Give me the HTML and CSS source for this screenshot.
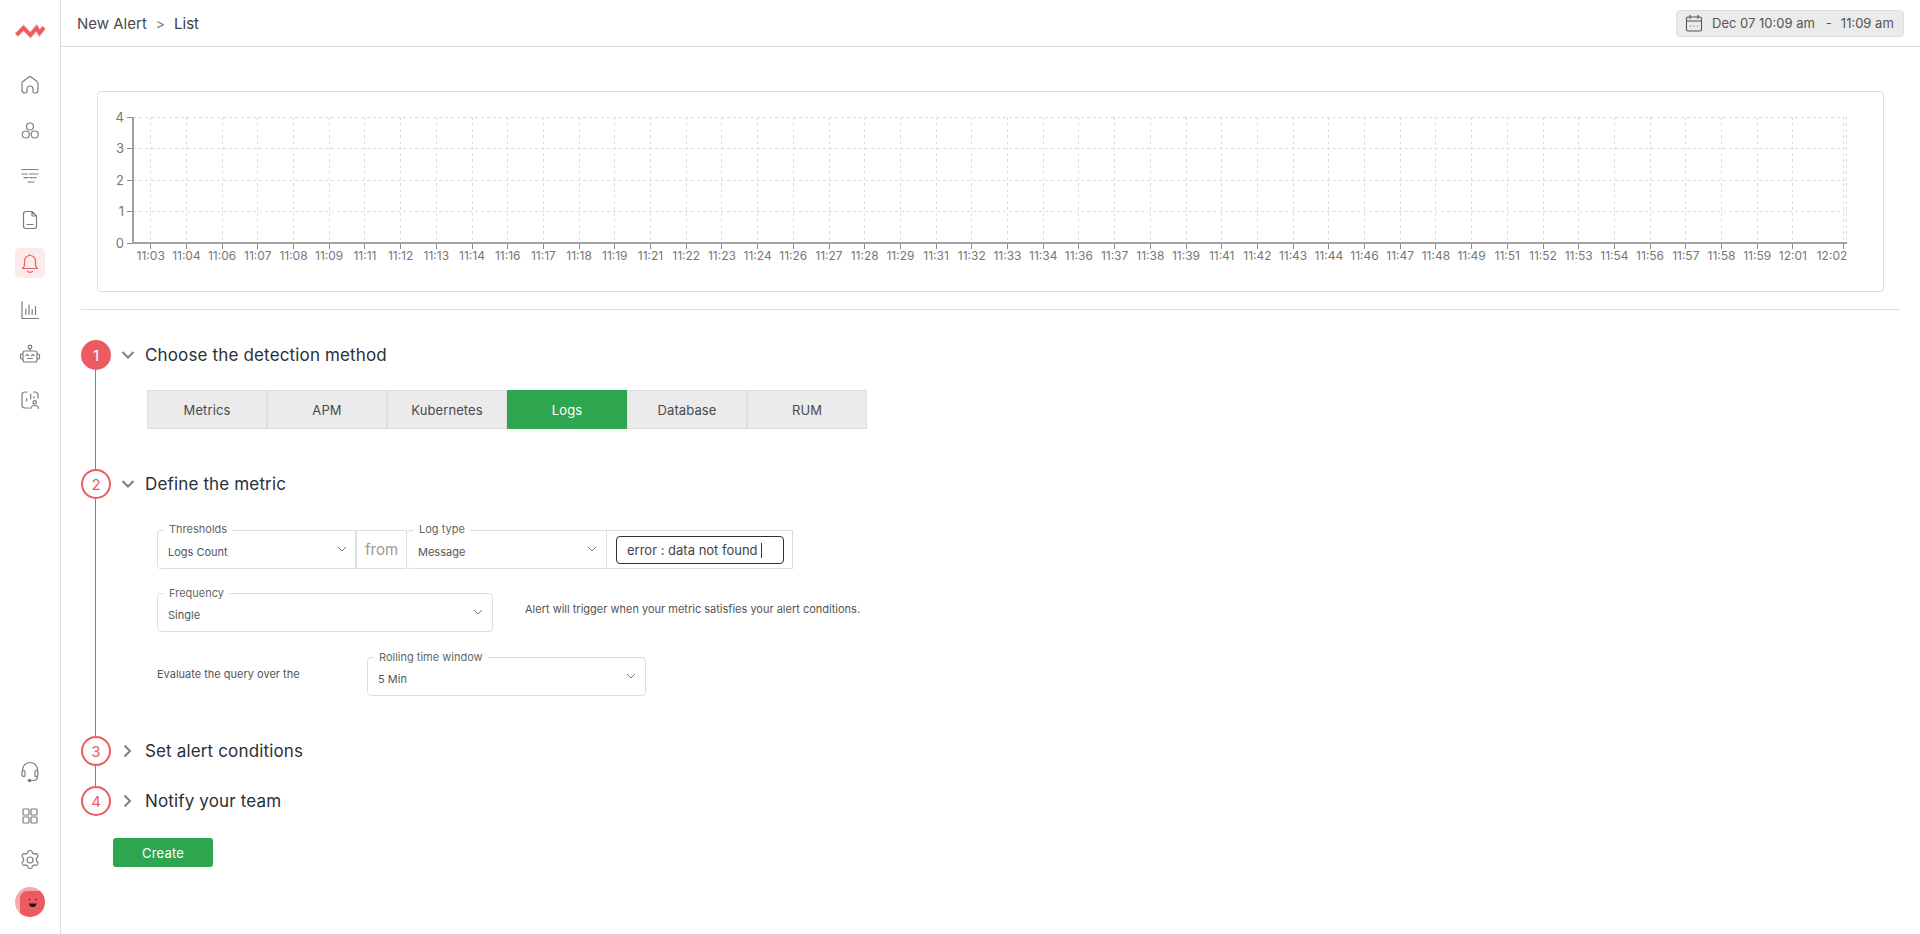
FILE: index.html
```html
<!DOCTYPE html>
<html lang="en">
<head>
<meta charset="utf-8">
<title>New Alert</title>
<link rel="stylesheet" href="styles.css">
</head>
<body>
<div class="app">
  <aside class="sidebar">
    <div class="logo">
      <svg width="30" height="30" viewBox="15 15 30 30"><path class="logo-glow" d="M16.500 35L23.500 28L30.500 35L36.500 28L39.500 33L44 27.500"/><path class="logo-line" d="M16.500 35L23.500 28L30.500 35L36.500 28L39.500 33L44 27.500"/></svg>
    </div>
    <nav class="nav">
      <a class="nav-item"><svg class="ico" viewBox="0 0 20 20"><path d="M2 15V8.500q0-1.300 1-2.100l5.500-4.200q1.500-1.100 3 0l5.500 4.200q1 .8 1 2.100V15q0 3-3 3h-.8q-1.200 0-1.200-1.200V14a3 3 0 0 0-6 0v2.800Q7 18 5.800 18H5q-3 0-3-3z"/></svg></a>
      <a class="nav-item"><svg class="ico" viewBox="0 0 20 20"><circle cx="10" cy="6.500" r="3.500"/><circle cx="5.800" cy="14.500" r="3.500"/><circle cx="14.700" cy="14.500" r="3.500"/></svg></a>
      <a class="nav-item"><svg class="ico" viewBox="0 0 20 20"><path d="M2 4.500h16M2 9h5.500M9.500 9H15.500M16.500 9H18M4 12.700h4M10 12.700h2.500M14 12.700h2M8 17h6"/></svg></a>
      <a class="nav-item"><svg class="ico" viewBox="0 0 20 20"><path d="M3.500 4q0-2.500 2.500-2.500h6L16.500 6v10q0 2.500-2.500 2.500H6q-2.500 0-2.500-2.500zM12 1.500V6h4.500M7 14.500h6"/></svg></a>
      <a class="nav-item nav-active"><svg class="ico ico-red" viewBox="0 0 20 20"><path d="M2.500 15.500q2-1.500 2-4V8a5.500 5.500 0 0 1 11 0v3.500q0 2.500 2 4zM9.500 2.500V1.500M7.500 18.500q2.500 1.500 5 0"/></svg></a>
      <a class="nav-item"><svg class="ico" viewBox="0 0 20 20"><path d="M2 1.500V18.500H18.500M5.800 14.500V9M9 14.500V5M12.200 14.500V9.500M15.500 14.500V6.500"/></svg></a>
      <a class="nav-item"><svg class="ico ico-wide" viewBox="0 0 22 22"><circle cx="11" cy="3" r="1.800"/><path d="M11 4.800V7M6 7h10q2 0 2 2v7q0 2-2 2H6q-2 0-2-2V9q0-2 2-2zM4 10H2.500q-1 0-1 1v3q0 1 1 1H4M18 10h1.500q1 0 1 1v3q0 1-1 1H18M7 11.500l1.200-1 1.200 1M12.600 11.500l1.200-1 1.200 1M8.500 14.500h5"/></svg></a>
      <a class="nav-item"><svg class="ico" viewBox="0 0 20 20"><path d="M7 2H5q-3 0-3 3v10q0 3 3 3h4M13.500 2H15q3 0 3 3v3M6.700 11V8.500M10.700 9V4M14 8V6.500M14.700 14a1.700 1.700 0 1 1 0-3.400 1.700 1.700 0 0 1 0 3.400zM11 18.500q0-3 3.700-3t3.700 3"/></svg></a>
    </nav>
    <nav class="nav nav-bottom">
      <a class="nav-item"><svg class="ico ico-wide" viewBox="0 0 22 22"><path d="M3.500 11V9a7.500 7.500 0 0 1 15 0v2M5 9.500q-2 0-2 2v2q0 2 2 2 1 0 1-1v-4q0-1-1-1zM17 9.500q2 0 2 2v2q0 2-2 2-1 0-1-1v-4q0-1 1-1zM18.500 15.500q0 4-4.500 4H11.500"/><circle class="ico-fill" cx="10.500" cy="19.500" r="1.200"/></svg></a>
      <a class="nav-item"><svg class="ico" viewBox="0 0 20 20"><rect x="3" y="3" width="6" height="6" rx=".8"/><rect x="11" y="3" width="6" height="6" rx=".8"/><rect x="3" y="11" width="6" height="6" rx=".8"/><rect x="11" y="11" width="6" height="6" rx=".8"/></svg></a>
      <a class="nav-item"><svg class="ico ico-wide" viewBox="0 0 22 22"><circle cx="11" cy="11" r="3"/><path d="M9 2.500q.4-1 2-1t2 1l.4 1.600 1.700 1 1.700-.5q1-.2 1.800 1.100t.1 2.200L17.500 9.200v2.600l1.200 1.300q.7.900-.1 2.200t-1.800 1.100l-1.700-.5-1.700 1-.4 1.600q-.4 1-2 1t-2-1l-.4-1.600-1.700-1-1.700.5q-1 .2-1.800-1.100t-.1-2.200l1.200-1.300V9.200L3.300 7.900q-.7-.9.1-2.200t1.800-1.100l1.700.5 1.700-1z"/></svg></a>
      <a class="nav-item nav-avatar"><span class="avatar"><svg width="30" height="30" viewBox="0 0 30 30"><rect class="avatar-face" x="5" y="4" width="31" height="30" rx="7"/><circle class="avatar-ink" cx="14.500" cy="12.500" r=".7"/><circle class="avatar-ink" cx="21" cy="12.500" r=".7"/><path class="avatar-ink" d="M14 16.500h7.500q-.5 3.500-3.800 3.500T14 16.500z"/></svg></span></a>
    </nav>
  </aside>
  <main class="main">
    <header class="topbar">
      <div class="crumbs"><span>New Alert</span><span class="crumb-sep">&gt;</span><span class="crumb-current">List</span></div>
      <div class="range">
        <svg class="range-ico" viewBox="0 0 18 18"><path d="M3 3h12q1.500 0 1.500 1.500v11q0 1.500-1.500 1.500H3q-1.500 0-1.500-1.500v-11Q1.500 3 3 3zM1.500 7h15M5 1v4M13 1v4M5 12h1M8.500 12h1M12 12h1"/></svg>
        <span class="range-text">Dec 07 10:09 am</span><span class="range-dash">-</span><span class="range-text">11:09 am</span>
      </div>
    </header>
    <div class="content">
      <section class="chart-card">
        <svg class="chart" viewBox="98 92 1785 199">
          <path class="grid" d="M133 148.500H1847M133 180H1847M133 211.500H1847M133 117H1847M150.700 117V243M186.400 117V243M222.100 117V243M257.800 117V243M293.500 117V243M329.200 117V243M364.900 117V243M400.600 117V243M436.300 117V243M472 117V243M507.700 117V243M543.400 117V243M579.100 117V243M614.800 117V243M650.500 117V243M686.200 117V243M721.900 117V243M757.600 117V243M793.300 117V243M829 117V243M864.700 117V243M900.400 117V243M936.100 117V243M971.800 117V243M1007.500 117V243M1043.200 117V243M1078.900 117V243M1114.600 117V243M1150.300 117V243M1186 117V243M1221.700 117V243M1257.400 117V243M1293.100 117V243M1328.800 117V243M1364.500 117V243M1400.200 117V243M1435.900 117V243M1471.600 117V243M1507.300 117V243M1543 117V243M1578.700 117V243M1614.400 117V243M1650.100 117V243M1685.800 117V243M1721.500 117V243M1757.200 117V243M1792.900 117V243M1843.500 117V243M1846.500 117V243"/>
          <path class="tick" d="M127 117H133M127 148.500H133M127 180H133M127 211.500H133M127 243H133M150.700 243V249M186.400 243V249M222.100 243V249M257.800 243V249M293.500 243V249M329.200 243V249M364.900 243V249M400.600 243V249M436.300 243V249M472 243V249M507.700 243V249M543.400 243V249M579.100 243V249M614.800 243V249M650.500 243V249M686.200 243V249M721.900 243V249M757.600 243V249M793.300 243V249M829 243V249M864.700 243V249M900.400 243V249M936.100 243V249M971.800 243V249M1007.500 243V249M1043.200 243V249M1078.900 243V249M1114.600 243V249M1150.300 243V249M1186 243V249M1221.700 243V249M1257.400 243V249M1293.100 243V249M1328.800 243V249M1364.500 243V249M1400.200 243V249M1435.900 243V249M1471.600 243V249M1507.300 243V249M1543 243V249M1578.700 243V249M1614.400 243V249M1650.100 243V249M1685.800 243V249M1721.500 243V249M1757.200 243V249M1792.900 243V249M1843.500 243V249"/>
          <path class="axis" d="M133 117V243H1847"/>
          <g class="y-labels">
            <text x="124" y="121.500">4</text><text x="124" y="153">3</text><text x="124" y="184.500">2</text><text x="124" y="216">1</text><text x="124" y="247.500">0</text>
          </g>
          <g class="x-labels">
            <text x="150.700" y="260">11:03</text><text x="186.400" y="260">11:04</text><text x="222.100" y="260">11:06</text><text x="257.800" y="260">11:07</text><text x="293.500" y="260">11:08</text><text x="329.200" y="260">11:09</text><text x="364.900" y="260">11:11</text><text x="400.600" y="260">11:12</text><text x="436.300" y="260">11:13</text><text x="472" y="260">11:14</text><text x="507.700" y="260">11:16</text><text x="543.400" y="260">11:17</text><text x="579.100" y="260">11:18</text><text x="614.800" y="260">11:19</text><text x="650.500" y="260">11:21</text><text x="686.200" y="260">11:22</text><text x="721.900" y="260">11:23</text><text x="757.600" y="260">11:24</text><text x="793.300" y="260">11:26</text><text x="829" y="260">11:27</text><text x="864.700" y="260">11:28</text><text x="900.400" y="260">11:29</text><text x="936.100" y="260">11:31</text><text x="971.800" y="260">11:32</text><text x="1007.500" y="260">11:33</text><text x="1043.200" y="260">11:34</text><text x="1078.900" y="260">11:36</text><text x="1114.600" y="260">11:37</text><text x="1150.300" y="260">11:38</text><text x="1186" y="260">11:39</text><text x="1221.700" y="260">11:41</text><text x="1257.400" y="260">11:42</text><text x="1293.100" y="260">11:43</text><text x="1328.800" y="260">11:44</text><text x="1364.500" y="260">11:46</text><text x="1400.200" y="260">11:47</text><text x="1435.900" y="260">11:48</text><text x="1471.600" y="260">11:49</text><text x="1507.300" y="260">11:51</text><text x="1543" y="260">11:52</text><text x="1578.700" y="260">11:53</text><text x="1614.400" y="260">11:54</text><text x="1650.100" y="260">11:56</text><text x="1685.800" y="260">11:57</text><text x="1721.500" y="260">11:58</text><text x="1757.200" y="260">11:59</text><text x="1792.900" y="260">12:01</text><text x="1832" y="260">12:02</text>
          </g>
        </svg>
      </section>
      <hr class="divider">
      <div class="steps">
        <section class="step step-one">
          <div class="rail"><span class="num num-filled">1</span><span class="rail-line"></span></div>
          <div class="step-main">
            <div class="step-head">
              <svg class="chev" viewBox="0 0 14 14"><path d="M1.500 4L7 9.500 12.500 4"/></svg>
              <h2 class="step-title">Choose the detection method</h2>
            </div>
            <div class="tabs">
              <button class="tab">Metrics</button><button class="tab">APM</button><button class="tab">Kubernetes</button><button class="tab tab-on">Logs</button><button class="tab">Database</button><button class="tab">RUM</button>
            </div>
          </div>
        </section>
        <section class="step step-two">
          <div class="rail"><span class="num">2</span><span class="rail-line"></span></div>
          <div class="step-main">
            <div class="step-head">
              <svg class="chev" viewBox="0 0 14 14"><path d="M1.500 4L7 9.500 12.500 4"/></svg>
              <h2 class="step-title">Define the metric</h2>
            </div>
            <div class="form">
              <div class="form-row">
                <div class="field field-left"><span class="field-label">Thresholds</span><span class="field-value">Logs Count</span><svg class="sel-chev" viewBox="0 0 10 10"><path d="M1 3L5 7l4-4"/></svg></div>
                <div class="from">from</div>
                <div class="field field-log"><span class="field-label">Log type</span><span class="field-value">Message</span><svg class="sel-chev" viewBox="0 0 10 10"><path d="M1 3L5 7l4-4"/></svg></div>
                <div class="input-cell"><div class="input-box">error : data not found<span class="caret"></span></div></div>
              </div>
              <div class="form-row form-row-gap">
                <div class="field field-freq"><span class="field-label">Frequency</span><span class="field-value">Single</span><svg class="sel-chev" viewBox="0 0 10 10"><path d="M1 3L5 7l4-4"/></svg></div>
                <p class="hint">Alert will trigger when your metric satisfies your alert conditions.</p>
              </div>
              <div class="form-row form-row-gap2">
                <p class="eval">Evaluate the query over the</p>
                <div class="field field-roll"><span class="field-label">Rolling time window</span><span class="field-value">5 Min</span><svg class="sel-chev" viewBox="0 0 10 10"><path d="M1 3L5 7l4-4"/></svg></div>
              </div>
            </div>
          </div>
        </section>
        <section class="step step-three">
          <div class="rail"><span class="num">3</span><span class="rail-line"></span></div>
          <div class="step-main">
            <div class="step-head">
              <svg class="chev" viewBox="0 0 14 14"><path d="M3.500 1.500L9 7l-5.500 5.500"/></svg>
              <h2 class="step-title">Set alert conditions</h2>
            </div>
          </div>
        </section>
        <section class="step step-four">
          <div class="rail"><span class="num">4</span></div>
          <div class="step-main">
            <div class="step-head">
              <svg class="chev" viewBox="0 0 14 14"><path d="M3.500 1.500L9 7l-5.500 5.500"/></svg>
              <h2 class="step-title">Notify your team</h2>
            </div>
          </div>
        </section>
      </div>
      <button class="create">Create</button>
    </div>
  </main>
</div>
</body>
</html>
```

FILE: styles.css
```css
* { box-sizing: border-box; }
html, body { margin: 0; padding: 0; height: 100%; background: #fff; }
body { font-family: Inter, "Liberation Sans", sans-serif; color: #2b2f36; overflow: hidden; }
.app { display: flex; height: 934px; }

/* sidebar */
.sidebar { width: 61px; flex: none; border-right: 1px solid #dcdcdc; display: flex; flex-direction: column; align-items: center; padding: 15px 0 17px; }
.logo { width: 30px; height: 30px; margin-bottom: 25px; }
.logo svg { display: block; }
.logo-line { fill: none; stroke: #ec5b62; stroke-width: 3.8; }
.logo-glow { fill: none; stroke: #fbdede; stroke-width: 6; }
.nav { display: flex; flex-direction: column; gap: 15px; }
.nav-bottom { margin-top: auto; gap: 14px; }
.nav-item { width: 30px; height: 30px; display: flex; align-items: center; justify-content: center; border-radius: 5px; }
.nav-active { background: #fdeaea; margin: -2px 0 2px; }
.nav-avatar { margin-top: -2px; }
.ico { width: 20px; height: 20px; fill: none; stroke: #7d7d7d; stroke-width: 1.2; stroke-linecap: round; stroke-linejoin: round; }
.ico-wide { width: 22px; height: 22px; }
.ico-red { stroke: #ec5b62; }
.ico-fill { fill: #7d7d7d; }
.avatar { width: 30px; height: 30px; border-radius: 50%; background: #f9a9a9; overflow: hidden; display: block; }
.avatar svg { display: block; }
.avatar-face { fill: #ec5b62; }
.avatar-ink { fill: #1c1012; }

/* top bar */
.main { flex: 1; min-width: 0; display: flex; flex-direction: column; }
.topbar { height: 47px; flex: none; border-bottom: 1px solid #dcdcdc; display: flex; align-items: center; justify-content: space-between; padding: 0 16px; }
.crumbs { display: flex; align-items: center; gap: 9px; font-size: 15px; color: #4a4a4a; }
.crumb-sep { color: #7d7d7d; font-size: 14px; }
.crumb-current { color: #3a3a3a; }
.range { width: 228px; height: 27px; background: #ebebeb; border: 1px solid #dedede; border-radius: 4px; display: flex; align-items: center; padding: 0 8px; font-size: 13px; color: #555; white-space: nowrap; }
.range-ico { width: 18px; height: 18px; fill: none; stroke: #555; stroke-width: 1.1; margin-right: 9px; flex: none; }
.range-dash { margin: 0 9px 0 11px; }

/* content */
.content { padding: 0 20px; }
.chart-card { margin: 44px 16px 0; height: 201px; border: 1px solid #dedede; border-radius: 4px; }
.chart { display: block; width: 1785px; height: 199px; }
.grid { fill: none; stroke: #dedede; stroke-dasharray: 3 3; shape-rendering: crispEdges; }
.tick { fill: none; stroke: #8c8c8c; shape-rendering: crispEdges; }
.axis { fill: none; stroke: #a0a0a0; stroke-width: 2; shape-rendering: crispEdges; }
.y-labels text { font-size: 13px; fill: #777; text-anchor: end; }
.x-labels text { font-size: 12px; fill: #777; text-anchor: middle; }
.divider { border: 0; border-top: 1px solid #dedede; margin: 17px 0 30px; }

/* steps */
.step { display: grid; grid-template-columns: 30px 1fr; column-gap: 10px; }
.step-one { height: 129px; }
.step-two { height: 267px; }
.step-three { height: 50px; }
.step-four { height: 30px; }
.rail { display: flex; flex-direction: column; align-items: center; }
.num { width: 30px; height: 30px; flex: none; border-radius: 50%; border: 2px solid #ec5b62; color: #ec5b62; font-size: 15px; display: flex; align-items: center; justify-content: center; background: #fff; }
.num-filled { background: #ec5b62; color: #fff; }
.rail-line { width: 1px; flex: 1; background: #e6565e; margin-right: 1px; }
.step-head { height: 30px; display: flex; align-items: center; gap: 10px; }
.chev { width: 14px; height: 14px; fill: none; stroke: #808080; stroke-width: 2; flex: none; }
.step-title { margin: 0; font-size: 17px; letter-spacing: .15px; font-weight: 400; color: #2b2f36; }

.tabs { display: flex; margin: 20px 0 0 26px; }
.tab { width: 120px; height: 39px; background: #ebebeb; border: 1px solid #dedede; font: 13px Inter, sans-serif; letter-spacing: .1px; color: #4a4a4a; padding: 0; }
.tab-on { background: #2ea650; border-color: #2ea650; color: #fff; }

.form { margin: 31px 0 0 36px; }
.form-row { display: flex; align-items: center; }
.form-row-gap { margin-top: 24px; }
.form-row-gap2 { margin-top: 25px; }
.field { position: relative; height: 39px; background: #fff; border: 1px solid #dedede; display: flex; align-items: center; justify-content: space-between; padding: 4px 9px 0 10px; flex: none; border-radius: 4px; }
.field-left { width: 200px; border-radius: 4px 0 0 4px; border-right-width: 2px; padding-right: 8px; }
.field-log { width: 200px; border-radius: 4px 0 0 4px; border-left: 0; padding-left: 11px; }
.field-freq { width: 336px; }
.field-roll { width: 279px; }
.field-label { position: absolute; left: 6px; top: -8px; padding: 0 5px; background: #fff; font-size: 11px; line-height: 14px; color: #666; }
.field-left .field-label, .field-log .field-label { top: -9px; }
.field-log .field-label { left: 7px; }
.field-value { font-size: 11px; color: #555; }
.sel-chev { width: 10px; height: 10px; fill: none; stroke: #777; stroke-width: 1; margin-top: -5px; }
.from { width: 50px; height: 39px; border: 1px solid #dedede; border-left: 0; color: #999; font-size: 15px; display: flex; align-items: center; justify-content: center; flex: none; }
.input-cell { width: 186px; height: 39px; border: 1px solid #dedede; border-left: 0; padding: 5px 8px 5px 9px; flex: none; }
.input-box { height: 28px; border: 1px solid #2b2f36; border-radius: 4px; padding: 0 10px; font-size: 13px; color: #444; display: flex; align-items: center; }
.caret { width: 1px; height: 15px; background: #2b2f36; margin-left: 3px; }
.hint { margin: -7px 0 0 32px; font-size: 11px; color: #555; }
.eval { margin: -5px 0 0; width: 210px; font-size: 11px; color: #555; }

.create { display: block; width: 100px; height: 29px; margin: 22px 0 0 32px; background: #2ea650; border: 0; border-radius: 3px; color: #fff; font: 13px Inter, sans-serif; letter-spacing: .2px; padding: 0; }
```
